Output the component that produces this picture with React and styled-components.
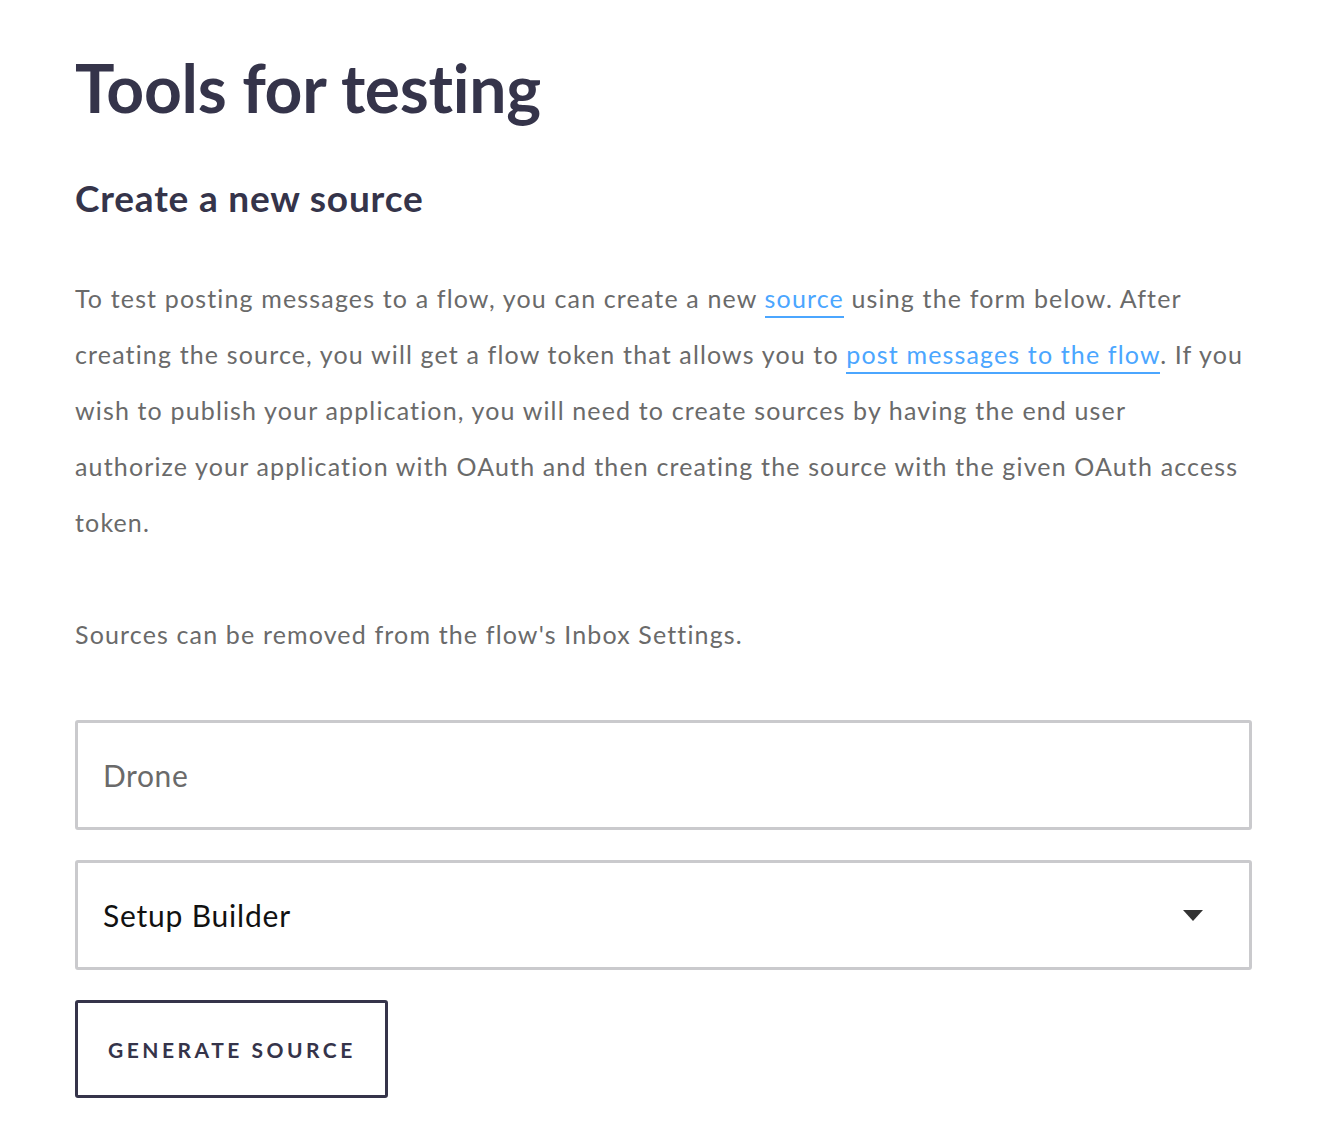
import styled, { createGlobalStyle } from "styled-components";

const Global = createGlobalStyle`
  body {
    margin: 0;
    background: #ffffff;
    font-family: Lato, "Open Sans", "Liberation Sans", sans-serif;
  }
  * { box-sizing: border-box; }
`;

const Page = styled.div`
  padding: 40px 70px 40px 75px;
  max-width: 1322px;
`;

const Title = styled.h1`
  margin: 0;
  font-size: 66px;
  line-height: 96px;
  font-weight: 700;
  color: #35344a;
  letter-spacing: -0.3px;
`;

const Subtitle = styled.h2`
  margin: 34px 0 0;
  font-size: 37px;
  line-height: 56px;
  font-weight: 700;
  color: #35344a;
  letter-spacing: 0.8px;
`;

const Text = styled.p`
  margin: ${(p) => p.$top || 44}px 0 0;
  font-size: 25px;
  line-height: 56px;
  letter-spacing: 1.15px;
  color: #6a6a6a;
`;

const Link = styled.a`
  color: #4ba6ff;
  text-decoration: none;
  border-bottom: 2px solid #4ba6ff;
  padding-bottom: 3px;
`;

const Form = styled.form`
  margin-top: 58px;
  display: flex;
  flex-direction: column;
  gap: 30px;
  align-items: flex-start;
`;

const Field = styled.input`
  width: 100%;
  height: 110px;
  border: 3px solid #cacacd;
  border-radius: 3px;
  padding: 0 25px;
  font-family: inherit;
  font-size: 30px;
  letter-spacing: 0.6px;
  color: #6a6a6a;
  background: #fff;
  outline: none;
`;

const SelectBox = styled.div`
  width: 100%;
  height: 110px;
  border: 3px solid #cacacd;
  border-radius: 3px;
  padding: 0 46px 0 25px;
  display: flex;
  align-items: center;
  justify-content: space-between;
  font-size: 30px;
  letter-spacing: 0.8px;
  color: #111;
`;

const Arrow = styled.span`
  width: 0;
  height: 0;
  border-left: 10px solid transparent;
  border-right: 10px solid transparent;
  border-top: 11px solid #333;
`;

const Button = styled.button`
  height: 98px;
  padding: 0 29px 0 30px;
  border: 3px solid #35344a;
  border-radius: 3px;
  background: #fff;
  font-family: inherit;
  font-size: 21px;
  font-weight: 700;
  letter-spacing: 3.5px;
  color: #35344a;
  cursor: pointer;
`;

const App = () => {
  return (
    <>
      <Global />
      <Page>
        <Title>Tools for testing</Title>
        <Subtitle>Create a new source</Subtitle>
        <Text>
          To test posting messages to a flow, you can create a new{" "}
          <Link href="#">source</Link> using the form below. After creating the
          source, you will get a flow token that allows you to{" "}
          <Link href="#">post messages to the flow</Link>. If you wish to
          publish your application, you will need to create sources by having
          the end user
          <br />
          authorize your application with OAuth and then creating the source
          with the given OAuth access token.
        </Text>
        <Text $top={56}>
          Sources can be removed from the flow's Inbox Settings.
        </Text>
        <Form onSubmit={(e) => e.preventDefault()}>
          <Field type="text" defaultValue="Drone" />
          <SelectBox>
            <span>Setup Builder</span>
            <Arrow />
          </SelectBox>
          <Button type="submit">GENERATE SOURCE</Button>
        </Form>
      </Page>
    </>
  );
};

export default App;
